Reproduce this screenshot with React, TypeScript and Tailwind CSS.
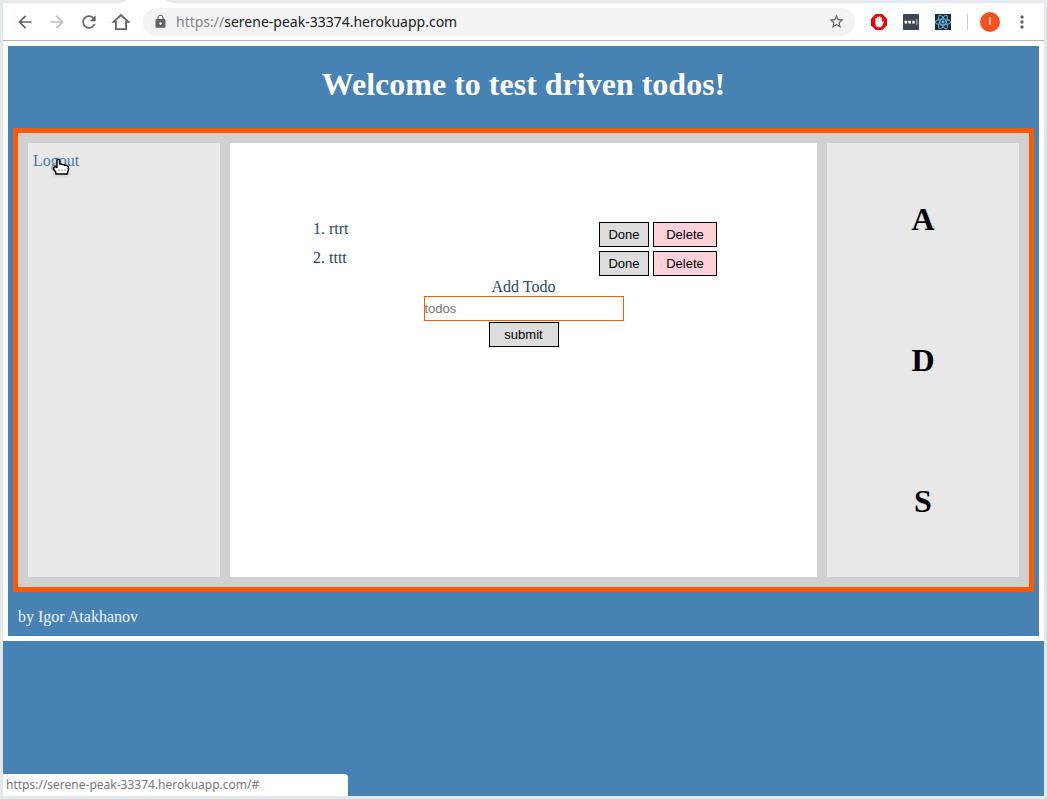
import React from "react";
import {
  MdArrowBack,
  MdArrowForward,
  MdRefresh,
  MdLock,
  MdStarBorder,
  MdMoreVert,
} from "react-icons/md";
import { FaReact } from "react-icons/fa";

const todos = ["rtrt", "tttt"];

function HomeIcon() {
  return (
    <svg width="20" height="20" viewBox="0 0 20 20" fill="none" stroke="#5f6368" strokeWidth="1.8" aria-hidden="true">
      <path d="M4.9 9.8H2.6L10 3l7.4 6.8h-2.3v7.3H4.9z" />
    </svg>
  );
}

function BlockerIcon() {
  return (
    <svg width="16" height="16" viewBox="0 0 16 16" aria-hidden="true">
      <path d="M4.7 0h6.6L16 4.7v6.6L11.3 16H4.7L0 11.3V4.7z" fill="#e3080c" />
      <path
        d="M5.2 8V4.6M6.9 7.5V3.2M8.6 7.5V2.9M10.3 8.5V4"
        stroke="#fff"
        strokeWidth="1.5"
        strokeLinecap="round"
      />
      <path d="M4.5 7.2H11v1.4l1-1.2c.5-.4 1.1 0 .9.5L11 12c-.6.8-1.3 1.3-2.5 1.3-2.4 0-4-1-4-3.4z" fill="#fff" />
    </svg>
  );
}

function DotsIcon() {
  return (
    <svg width="16" height="16" viewBox="0 0 16 16" aria-hidden="true">
      <rect width="16" height="16" rx="1" fill="#3a4753" />
      <path d="M1.6 6.8h2.6v2.6H1.6zM5.4 6.8H8v2.6H5.4zM9.2 6.8h2.6v2.6H9.2z" fill="#fff" />
      <path d="M13.8 5v6" stroke="#a9b1b8" strokeWidth="1.2" />
    </svg>
  );
}

function HandCursor() {
  return (
    <svg
      className="pointer-events-none absolute left-5 top-2.5 drop-shadow-sm"
      width="17"
      height="18"
      viewBox="0 0 17 18"
      aria-hidden="true"
    >
      <path
        d="M4 9.5V2.8c0-2 2.6-2 2.6 0V6h1.8l.6.6h2l.5.6h2l1.8 1.6v3.7l-.8 1.5v2H2.8v-2L.8 11.7V9.3l1.2-.6z"
        fill="#fff"
        stroke="#000"
        strokeWidth="1.4"
        strokeLinejoin="round"
      />
      <path d="M5 12.2h2M8 12.2h2M11 12.2h2" stroke="#999" />
    </svg>
  );
}

function TabEdge() {
  return (
    <svg
      className="absolute -top-[3px] left-[116px]"
      width="54"
      height="3"
      viewBox="0 0 54 3"
      aria-hidden="true"
    >
      <path d="M0 3Q5 3 7 0h40q2 3 7 3z" fill="#fff" />
    </svg>
  );
}

function BrowserBar() {
  return (
    <header className="relative flex h-[38px] items-center border-b border-[#b4b4b4] bg-white px-3 text-[#5f6368]">
      <TabEdge />
      <nav className="flex items-center gap-3" aria-label="Browser">
        <button aria-label="Back"><MdArrowBack size={20} /></button>
        <button aria-label="Forward" className="text-[#babcbe]"><MdArrowForward size={20} /></button>
        <button aria-label="Reload"><MdRefresh size={20} /></button>
        <button aria-label="Home"><HomeIcon /></button>
      </nav>
      <div className="ml-3 flex h-7 min-w-0 flex-1 items-center rounded-full bg-[#f1f3f4] px-2.5">
        <MdLock size={15} />
        <div className="ml-2 flex-1 font-['Noto_Sans',sans-serif] text-sm text-[#202124]">
          <span className="text-[#80868b]">https://</span>serene-peak-33374.herokuapp.com
        </div>
        <button aria-label="Bookmark"><MdStarBorder size={17} /></button>
      </div>
      <div className="ml-4 flex items-center gap-4">
        <button aria-label="Ad blocker"><BlockerIcon /></button>
        <button aria-label="Passwords"><DotsIcon /></button>
        <button aria-label="React tools" className="flex size-4 items-center justify-center bg-[#20232a] text-[#61b8ef]">
          <FaReact size={16} stroke="currentColor" strokeWidth={12} />
        </button>
      </div>
      <div className="ml-4 h-4 w-px bg-[#c8cacc]" />
      <button className="ml-3 size-5 rounded-full bg-[#f4511e] font-['Liberation_Sans',sans-serif] text-[11px] text-white">I</button>
      <button className="ml-3" aria-label="Menu"><MdMoreVert size={20} /></button>
    </header>
  );
}

const control = "h-[25px] border border-black font-['Liberation_Sans',sans-serif] text-[13px] text-black";

export default function App() {
  return (
    <div className="relative flex min-h-screen flex-col border-[3px] border-[#e3e8eb] bg-[#4682b4] font-['Liberation_Serif',serif] text-base">
      <BrowserBar />
      <div className="border-[5px] border-white bg-[#4682b4]">
        <h1 className="pt-5 pb-[25px] text-center text-[32px] leading-[37px] font-bold text-white">
          Welcome to test driven todos!
        </h1>
        <main className="mx-[5px] flex gap-2.5 border-[5px] border-[#ff5900] bg-[#d0d0d0] p-2.5">
          <aside className="w-48 shrink-0 bg-[#e8e8e8] p-[5px]">
            <div className="relative pt-1 leading-[18px]">
              <a href="#" className="text-[#4a7ba3]">Logout</a>
              <HandCursor />
            </div>
          </aside>
          <section className="flex min-h-[434px] flex-1 flex-col items-center bg-white px-[83px] pt-[79px] text-[#2a4a64]">
            <ol className="flex w-full flex-col gap-1">
              {todos.map((todo, i) => (
                <li key={todo} className="flex h-[25px] justify-between">
                  <span className="leading-[14px]">{i + 1}. {todo}</span>
                  <span className="mr-[17px] flex gap-1">
                    <button className={`${control} w-[50px] bg-[#dddddd]`}>Done</button>
                    <button className={`${control} w-16 bg-[#ffd1d9]`}>Delete</button>
                  </span>
                </li>
              ))}
            </ol>
            <form className="flex flex-col items-center" onSubmit={(e) => e.preventDefault()}>
              <label htmlFor="todo" className="pt-px leading-[19px]">Add Todo</label>
              <input
                id="todo"
                placeholder="todos"
                className="h-[25px] w-[200px] border border-[#ff5900] font-['Liberation_Sans',sans-serif] text-[13px] placeholder:text-[#757575]"
              />
              <button className={`${control} mt-px w-[70px] bg-[#dddddd]`}>submit</button>
            </form>
          </section>
          <aside className="flex w-48 shrink-0 flex-col items-center justify-around bg-[#e8e8e8] py-[5px] text-[32px] leading-9 font-bold text-black">
            <h2>A</h2>
            <h2>D</h2>
            <h2>S</h2>
          </aside>
        </main>
        <footer className="px-2.5 pt-4 pb-2.5 leading-[18px] text-[#f0f4f8]">by Igor Atakhanov</footer>
      </div>
      <div className="absolute bottom-0 left-0 h-[22px] w-[345px] rounded-tr bg-white pl-[3px] font-['Noto_Sans',sans-serif] text-xs leading-[22px] text-[#777777]">
        https://serene-peak-33374.herokuapp.com/#
      </div>
    </div>
  );
}
